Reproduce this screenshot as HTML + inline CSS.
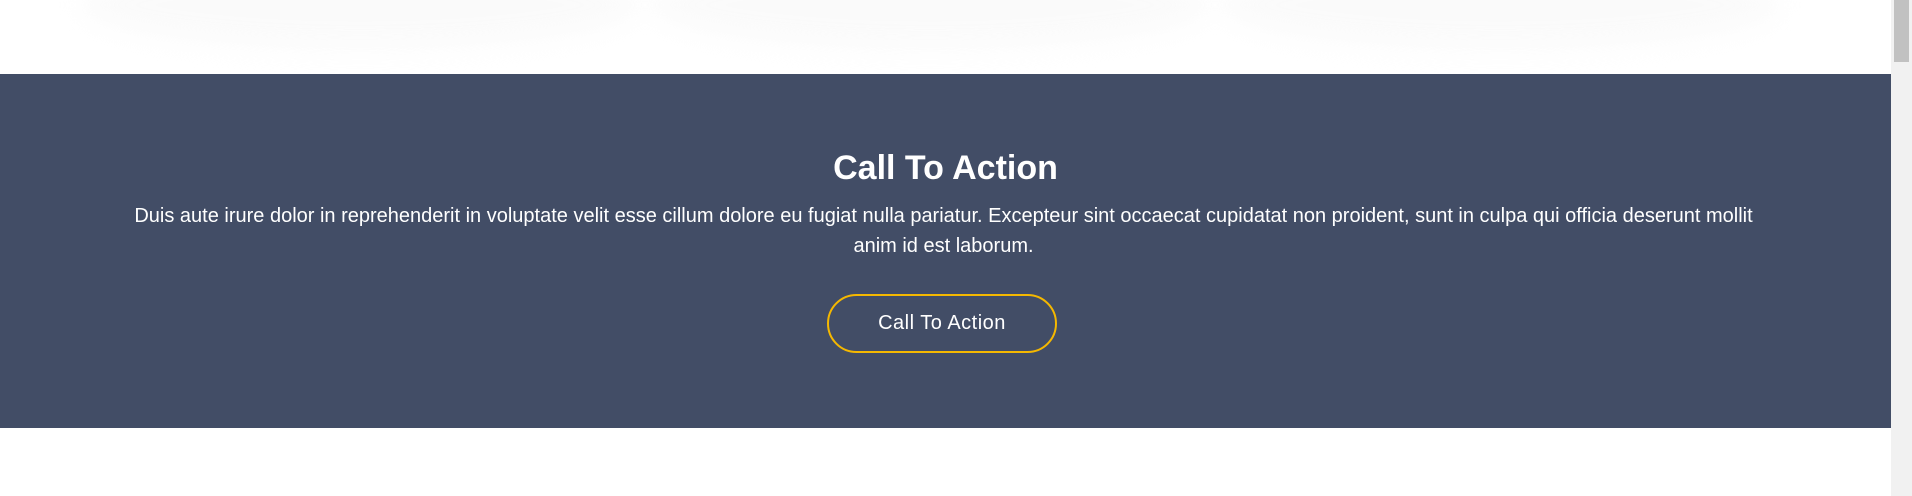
<!DOCTYPE html>
<html><head><style>
html,body{margin:0;padding:0;width:1912px;height:496px;overflow:hidden;background:#fff;font-family:"Liberation Sans",Arial,sans-serif;}
.top{position:absolute;left:0;top:0;width:1891px;height:74px;background:#fff;overflow:hidden}
.sh{position:absolute;top:-40px;height:90px;border-radius:50%;background:#f8f8f8;filter:blur(12px);opacity:.6}
.band{position:absolute;left:0;top:74px;width:1891px;height:354px;background:#424d66;}
h1{position:absolute;left:0;width:1891px;top:148px;margin:0;font-size:34px;font-weight:bold;line-height:40px;text-align:center;color:#fff}
p{position:absolute;left:126px;width:1635px;top:201px;margin:0;font-size:20px;line-height:30px;text-align:center;color:#fff}
.btn{position:absolute;left:827px;top:294px;width:226px;height:55px;border:2px solid #f5b800;border-radius:30px;font-size:20px;line-height:55px;letter-spacing:0.5px;color:#fff;text-align:center}
.sb{position:absolute;left:1891px;top:0;width:21px;height:496px;background:#f1f1f1;}
.th{position:absolute;left:1894px;top:0;width:15px;height:62px;background:#c1c1c1;}
</style></head><body>
<div class="top">
<div class="sh" style="left:80px;width:560px"></div>
<div class="sh" style="left:650px;width:560px"></div>
<div class="sh" style="left:1220px;width:560px"></div>
</div>
<div class="band"></div>
<h1>Call To Action</h1>
<p>Duis aute irure dolor in reprehenderit in voluptate velit esse cillum dolore eu fugiat nulla pariatur. Excepteur sint occaecat cupidatat non proident, sunt in culpa qui officia deserunt mollit anim id est laborum.</p>
<div class="btn">Call To Action</div>
<div class="sb"></div><div class="th"></div>
</body></html>
